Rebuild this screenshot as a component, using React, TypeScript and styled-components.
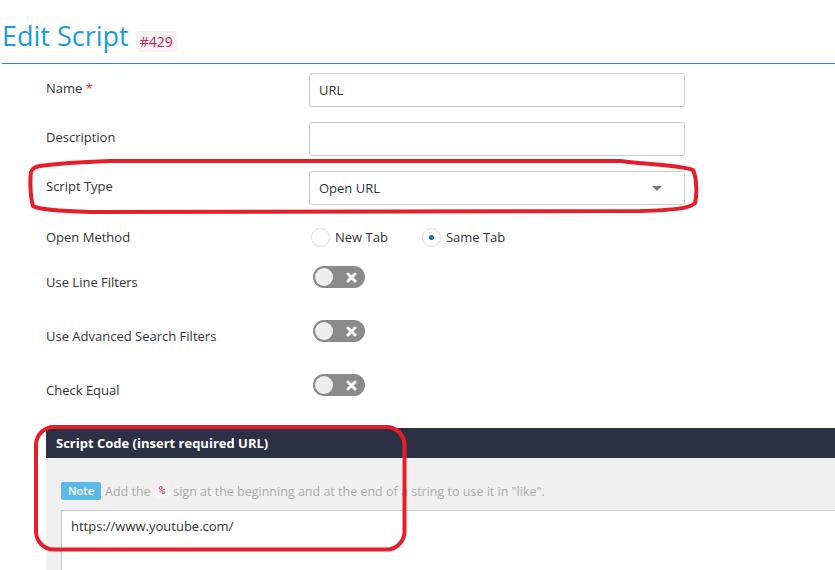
import React from "react";
import styled, { createGlobalStyle } from "styled-components";

const Global = createGlobalStyle`
  html, body { margin: 0; padding: 0; background: #fff; }
  body { font-family: "Open Sans", "Liberation Sans", sans-serif; font-size: 13px; color: #333; }
  #root { overflow: hidden; }
`;

const Page = styled.div`
  position: relative;
  width: 835px;
  height: 570px;
  overflow: hidden;
  background: #fff;
`;

const Header = styled.div`
  display: flex;
  align-items: flex-end;
  margin-left: 2px;
  padding: 18px 0 9px 0;
  border-bottom: 1px solid #1e8ad0;
`;

const Title = styled.h1`
  margin: 0;
  font-size: 27px;
  line-height: 36px;
  font-weight: 400;
  color: #1a9be0;
`;

const IdBadge = styled.span`
  margin: 0 0 2px 7px;
  padding: 2px 4px;
  font-size: 14px;
  line-height: 17px;
  color: #c7254e;
  background: #f9f2f4;
  border-radius: 4px;
`;

const Form = styled.div`
  display: flex;
  flex-direction: column;
  padding: 9px 0 0 46px;
`;

const Row = styled.div<{ $h: number }>`
  display: grid;
  grid-template-columns: 263px 376px;
  height: ${(p) => p.$h}px;
  align-items: start;
`;

const Label = styled.div<{ $pt: number }>`
  padding-top: ${(p) => p.$pt}px;
  line-height: 20px;
  color: #333;
`;

const Required = styled.span`
  color: #c9302c;
`;

const TextInput = styled.div`
  box-sizing: border-box;
  height: 34px;
  padding: 0 9px;
  border: 1px solid #ccc;
  border-radius: 3px;
  display: flex;
  align-items: center;
  color: #333;
  background: #fff;
`;

const Caret = styled.span`
  margin-left: auto;
  margin-right: 13px;
  width: 0;
  height: 0;
  border-left: 5px solid transparent;
  border-right: 5px solid transparent;
  border-top: 5px solid #777;
`;

const RadioGroup = styled.div`
  display: flex;
  align-items: center;
  gap: 34px;
  height: 20px;
  margin-top: 6px;
  padding-left: 2px;
`;

const RadioOption = styled.label`
  display: flex;
  align-items: center;
  gap: 5px;
  line-height: 20px;
  color: #333;
`;

const RadioCircle = styled.span<{ $on?: boolean }>`
  box-sizing: border-box;
  width: 19px;
  height: 19px;
  border: 1px solid #ddd;
  border-radius: 50%;
  background: #fff;
  display: flex;
  align-items: center;
  justify-content: center;
  &::after {
    content: "";
    display: ${(p) => (p.$on ? "block" : "none")};
    width: 5px;
    height: 5px;
    border-radius: 50%;
    background: #1170ad;
  }
`;

const Toggle = styled.div`
  box-sizing: border-box;
  width: 52px;
  height: 22px;
  margin-left: 4px;
  border-radius: 11px;
  background: #8a8a8a;
  display: flex;
  align-items: center;
  padding: 0 2px;
`;

const Knob = styled.span`
  width: 18px;
  height: 18px;
  border-radius: 50%;
  background: #eee;
`;

const ToggleX = styled.svg`
  margin-left: 13px;
`;

const Panel = styled.div`
  margin-left: 46px;
  width: 820px;
`;

const PanelHead = styled.div`
  height: 30px;
  background: #2d3044;
  color: #fff;
  font-weight: 700;
  font-size: 13px;
  display: flex;
  align-items: center;
  padding-left: 10px;
`;

const PanelBody = styled.div`
  background: #f0f0f0;
  padding: 24px 0 0 15px;
  height: 200px;
`;

const NoteLine = styled.div`
  display: flex;
  align-items: center;
  gap: 4px;
  height: 18px;
  color: #aaa;
  font-size: 12.5px;
  white-space: nowrap;
`;

const NoteBadge = styled.span`
  background: #5bb8e8;
  color: #fff;
  font-size: 11px;
  font-weight: 600;
  line-height: 18px;
  padding: 0 7px;
  border-radius: 2px;
`;

const Code = styled.code`
  font-family: "DejaVu Sans Mono", "Liberation Mono", monospace;
  font-size: 11px;
  line-height: 16px;
  color: #c7254e;
  background: #f9f2f4;
  padding: 0 4px;
  border-radius: 3px;
`;

const TextArea = styled.div`
  margin-top: 10px;
  box-sizing: border-box;
  height: 100px;
  background: #fff;
  border: 1px solid #ccc;
  padding: 5px 9px;
  line-height: 20px;
  color: #333;
`;

const Annotations = styled.svg`
  position: absolute;
  left: 0;
  top: 0;
  pointer-events: none;
`;

const XIcon = () => (
  <ToggleX width="11" height="11" viewBox="0 0 11 11">
    <path d="M2 2 L9 9 M9 2 L2 9" stroke="#fafafa" strokeWidth="3" strokeLinecap="round" />
  </ToggleX>
);

const Switch = () => (
  <Toggle>
    <Knob />
    <XIcon />
  </Toggle>
);

export default function App() {
  return (
    <Page>
      <Global />
      <Header>
        <Title>Edit Script</Title>
        <IdBadge>#429</IdBadge>
      </Header>
      <Form>
        <Row $h={49}>
          <Label $pt={5}>
            Name <Required>*</Required>
          </Label>
          <TextInput>URL</TextInput>
        </Row>
        <Row $h={49}>
          <Label $pt={5}>Description</Label>
          <TextInput />
        </Row>
        <Row $h={50}>
          <Label $pt={5}>Script Type</Label>
          <TextInput>
            Open URL
            <Caret />
          </TextInput>
        </Row>
        <Row $h={45}>
          <Label $pt={6}>Open Method</Label>
          <RadioGroup>
            <RadioOption>
              <RadioCircle />
              New Tab
            </RadioOption>
            <RadioOption>
              <RadioCircle $on />
              Same Tab
            </RadioOption>
          </RadioGroup>
        </Row>
        <Row $h={54}>
          <Label $pt={6}>Use Line Filters</Label>
          <Switch />
        </Row>
        <Row $h={54}>
          <Label $pt={6}>Use Advanced Search Filters</Label>
          <Switch />
        </Row>
        <Row $h={54}>
          <Label $pt={6}>Check Equal</Label>
          <Switch />
        </Row>
      </Form>
      <Panel>
        <PanelHead>Script Code (insert required URL)</PanelHead>
        <PanelBody>
          <NoteLine>
            <NoteBadge>Note</NoteBadge>
            Add the <Code>%</Code> sign at the beginning and at the end of a string to use it in "like".
          </NoteLine>
          <TextArea>https://www.youtube.com/</TextArea>
        </PanelBody>
      </Panel>
      <Annotations width="835" height="570" viewBox="0 0 835 570">
        <path
          d="M40,166 C60,163 80,162 110,161 L620,161 C640,164 680,165 693,170 C697,178 697,196 695,203 C690,209 670,210 640,211 L90,212 C60,211 40,210 33,206 C30,196 30,178 31,172 C32,168 35,167 40,166 Z"
          fill="none"
          stroke="#e61e2a"
          strokeWidth="4"
        />
        <rect x="36" y="427" width="368.5" height="122.5" rx="18" fill="none" stroke="#e61e2a" strokeWidth="4" />
      </Annotations>
    </Page>
  );
}
